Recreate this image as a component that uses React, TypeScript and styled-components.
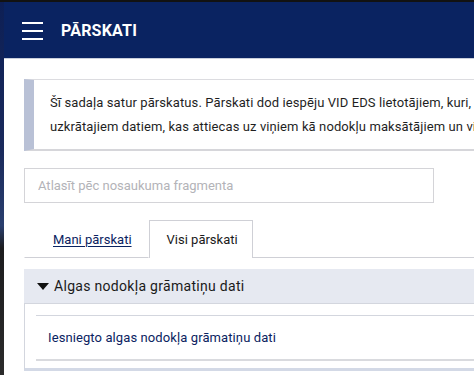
import styled, { createGlobalStyle } from "styled-components";

const GlobalStyle = createGlobalStyle`
  html, body {
    margin: 0;
    padding: 0;
    width: 474px;
    height: 375px;
    overflow: hidden;
    background: #ffffff;
  }
  body {
    font-family: Roboto, "Noto Sans", "Liberation Sans", sans-serif;
    color: #222;
  }
`;

export default function App() {
  return (
    <>
      <GlobalStyle />
      <Frame>
        <DesktopEdge />
        <Page>
          <Header>
            <MenuButton aria-label="menu">
              <span />
              <span />
              <span />
            </MenuButton>
            <Title>PĀRSKATI</Title>
          </Header>
          <Content>
            <InfoBox>
              <InfoLine>
                Šī sadaļa satur pārskatus. Pārskati dod iespēju VID EDS lietotājiem, kuri, mums
                sniedz datus
              </InfoLine>
              <InfoLine>
                uzkrātajiem datiem, kas attiecas uz viņiem kā nodokļu maksātājiem un viņu
                pārstāvjiem
              </InfoLine>
            </InfoBox>
            <Search placeholder="Atlasīt pēc nosaukuma fragmenta" />
            <Tabs>
              <Tab>
                <TabLink>Mani pārskati</TabLink>
              </Tab>
              <Tab $active>Visi pārskati</Tab>
              <TabFill />
            </Tabs>
            <Accordion>
              <AccordionHeader>
                <Caret />
                Algas nodokļa grāmatiņu dati
              </AccordionHeader>
              <AccordionBody>
                <ReportRow>
                  <ReportLink>Iesniegto algas nodokļa grāmatiņu dati</ReportLink>
                </ReportRow>
              </AccordionBody>
            </Accordion>
          </Content>
        </Page>
      </Frame>
    </>
  );
}

const Frame = styled.div`
  display: flex;
  width: 474px;
  height: 375px;
  border-top: 2px solid #121212;
  box-sizing: border-box;
  overflow: hidden;
`;

const DesktopEdge = styled.div`
  width: 4px;
  flex-shrink: 0;
  background: linear-gradient(
    to bottom,
    #0d1f55 0%,
    #1a2a5c 40%,
    #2a3f6e 60%,
    #1c1c1e 66%,
    #2b2b2b 100%
  );
`;

const Page = styled.div`
  flex: 1;
  min-width: 0;
  display: flex;
  flex-direction: column;
`;

const Header = styled.header`
  height: 56px;
  flex-shrink: 0;
  background: #0a2361;
  display: flex;
  align-items: center;
  gap: 18px;
  padding-left: 18px;
  border-bottom: 1px solid #c9cfdc;
`;

const MenuButton = styled.div`
  width: 21px;
  display: flex;
  flex-direction: column;
  gap: 6px;
  margin-top: 2px;
  & > span {
    display: block;
    height: 2px;
    background: #ffffff;
  }
`;

const Title = styled.h1`
  margin: 0;
  color: #ffffff;
  font-size: 16px;
  font-weight: 700;
  letter-spacing: 0.2px;
`;

const Content = styled.main`
  padding: 20px 0 0 20px;
  display: flex;
  flex-direction: column;
`;

const InfoBox = styled.div`
  height: 72px;
  box-sizing: border-box;
  border-top: 1px solid #dcdce0;
  border-bottom: 2px solid #d6d6da;
  border-left: 10px solid #b9c1d6;
  padding: 13px 0 0 16px;
  overflow: hidden;
  display: flex;
  flex-direction: column;
  gap: 4px;
`;

const InfoLine = styled.div`
  white-space: nowrap;
  font-size: 13px;
  line-height: 20px;
  letter-spacing: 0.1px;
  color: #1f1f1f;
`;

const Search = styled.input`
  margin-top: 17px;
  width: 410px;
  height: 35px;
  box-sizing: border-box;
  border: 1px solid #d4d4d8;
  padding: 0 13px;
  font-family: inherit;
  font-size: 13px;
  color: #333;
  outline: none;
  &::placeholder {
    color: #b3b3b8;
  }
`;

const Tabs = styled.div`
  display: flex;
  margin-top: 17px;
  height: 38px;
`;

const Tab = styled.div<{ $active?: boolean }>`
  box-sizing: border-box;
  display: flex;
  align-items: center;
  font-size: 13px;
  color: #1a1a1a;
  padding: ${(p) => (p.$active ? "0 14px 0 17px" : "0 16px 0 28px")};
  border: 1px solid ${(p) => (p.$active ? "#cfd0d6" : "transparent")};
  border-bottom: ${(p) => (p.$active ? "none" : "1px solid #cfd0d6")};
  background: #ffffff;
`;

const TabLink = styled.span`
  color: #0a2361;
  text-decoration: underline;
  text-underline-offset: 2px;
`;

const TabFill = styled.div`
  flex: 1;
  border-bottom: 1px solid #cfd0d6;
`;

const Accordion = styled.section`
  margin-top: 11px;
  display: flex;
  flex-direction: column;
`;

const AccordionHeader = styled.div`
  height: 35px;
  box-sizing: border-box;
  background: #e6e9f1;
  border-bottom: 1px solid #d3d6de;
  display: flex;
  align-items: center;
  gap: 5px;
  padding-left: 13px;
  font-size: 14px;
  letter-spacing: 0.3px;
  color: #1a1a1a;
`;

const Caret = styled.span`
  width: 0;
  height: 0;
  border-left: 6px solid transparent;
  border-right: 6px solid transparent;
  border-top: 7px solid #111;
`;

const AccordionBody = styled.div`
  border-left: 1px solid #d3d6de;
  padding: 11px 0 0 11px;
  height: 67px;
  box-sizing: border-box;
  border-bottom: 3px solid #d3d9e6;
`;

const ReportRow = styled.div`
  height: 46px;
  box-sizing: border-box;
  border-top: 1px solid #d3d6de;
  border-bottom: 2px solid #d9dade;
  display: flex;
  align-items: center;
  padding-left: 12px;
`;

const ReportLink = styled.span`
  color: #0a2361;
  font-size: 13px;
  letter-spacing: 0.1px;
`;
